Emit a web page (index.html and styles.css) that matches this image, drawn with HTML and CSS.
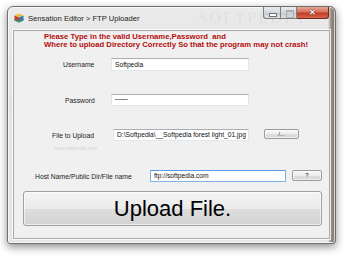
FILE: index.html
```html
<!DOCTYPE html>
<html lang="en">
<head>
    <meta charset="UTF-8">
    <title>Sensation Editor &gt; FTP Uploader</title>
    <link rel="stylesheet" href="styles.css">
</head>
<body>
    <div class="window">
        <div class="titlebar">
            <div class="caption">
                <svg class="app-icon" viewBox="0 0 10 10" width="10" height="10">
                    <path d="M5 0.5 L9.5 2.5 L5 4.5 L0.5 2.5 Z" fill="#e8c23a"/>
                    <path d="M0.5 2.5 L5 4.5 L5 9.5 L0.5 7.5 Z" fill="#d0362a"/>
                    <path d="M5 4.5 L9.5 2.5 L9.5 7.5 L5 9.5 Z" fill="#2b7fb8"/>
                    <path d="M0.5 6 L5 8 L9.5 6 L9.5 7.5 L5 9.5 L0.5 7.5 Z" fill="#2f9e7a"/>
                </svg>
                <span class="title">Sensation Editor &gt; FTP Uploader</span>
            </div>
            <span class="title-mark">SOFTPEDIA</span>
            <div class="caption-buttons">
                <span class="cap cap-min"></span>
                <span class="cap cap-max"></span>
                <span class="cap cap-close">&#x2715;</span>
            </div>
        </div>

        <div class="client">
            <p class="notice">Please Type in the valid Username,Password&nbsp; and<br>Where to upload Directory Correctly So that the program may not crash!</p>

            <div class="row row-user">
                <label class="label">Username</label>
                <div class="field">Softpedia</div>
            </div>

            <div class="row row-pass">
                <label class="label">Password</label>
                <div class="field field-pass">&bull;&bull;&bull;&bull;&bull;&bull;&bull;&bull;</div>
            </div>

            <div class="row row-file">
                <label class="label">File to Upload</label>
                <div class="field">D:\Softpedia\__Softpedia forest light_01.jpg</div>
                <button class="btn btn-browse">/...</button>
            </div>
            <div class="site-mark">www.softpedia.com</div>

            <div class="row row-host">
                <label class="label">Host Name/Public Dir/File name</label>
                <div class="field field-focus">ftp://softpedia.com</div>
                <button class="btn btn-help">?</button>
            </div>

            <button class="btn btn-upload">Upload File.</button>
        </div>
    </div>
</body>
</html>
```

FILE: styles.css
```css
* {
    margin: 0;
    padding: 0;
    box-sizing: border-box;
}

body {
    background: #ffffff;
    font-family: 'Liberation Sans', Arial, sans-serif;
    padding: 6px 0 0 7px;
    width: 350px;
    height: 257px;
    overflow: hidden;
}

.window {
    position: relative;
    width: 329px;
    height: 238px;
    padding: 0 5px 5px 5px;
    border: 1px solid #6f6f6f;
    border-radius: 6px 6px 3px 3px;
    background:
        linear-gradient(90deg, transparent 0, transparent calc(100% - 7px), #9a9084 calc(100% - 4px), #7c7268 100%),
        linear-gradient(180deg, #eaeaea 0, #e2e2e2 40%, #e6e6e6 100%);
    box-shadow: 0 3px 9px rgba(0,0,0,0.45), inset 0 0 0 1px rgba(255,255,255,0.7);
}

/* title bar */

.titlebar {
    position: relative;
    height: 23px;
    display: flex;
    align-items: flex-start;
}

.caption {
    display: flex;
    align-items: center;
    gap: 4px;
    height: 10px;
    margin: 6px 0 0 1px;
}

.app-icon {
    display: block;
    flex: none;
}

.title {
    font-size: 7.6px;
    color: #1c1c1c;
    white-space: nowrap;
}

.title-mark {
    position: absolute;
    left: 185px;
    top: 1px;
    font-family: 'Liberation Serif', serif;
    font-size: 17px;
    font-weight: bold;
    letter-spacing: 1px;
    color: rgba(0,0,0,0.035);
}

.caption-buttons {
    display: flex;
    margin-left: auto;
    margin-right: 1px;
    height: 12px;
}

.cap {
    position: relative;
    height: 12px;
    border: 1px solid #7d7d7d;
    border-top: none;
    background: linear-gradient(180deg, #e9ecef 0, #d4d8dc 50%, #c3c8cd 51%, #dde1e5 100%);
}

.cap-min,
.cap-max {
    width: 17px;
}

.cap-min {
    border-radius: 0 0 0 3px;
    border-right: none;
}

.cap-min::after {
    content: '';
    position: absolute;
    left: 5px;
    top: 6px;
    width: 6px;
    height: 2px;
    background: #fff;
    border: 1px solid #6d6d6d;
}

.cap-max::after {
    content: '';
    position: absolute;
    left: 5px;
    top: 3px;
    width: 6px;
    height: 5px;
    border: 1px solid #9a9a9a;
    border-top-width: 2px;
    opacity: 0.7;
}

.cap-close {
    width: 32px;
    border-left: none;
    border-color: #6b2a20;
    border-radius: 0 0 3px 0;
    background: linear-gradient(180deg, #eba697 0, #d9705e 45%, #c23b26 55%, #d7654a 100%);
    color: #fff;
    font-size: 8px;
    font-weight: bold;
    line-height: 11px;
    text-align: center;
    text-shadow: 0 0 1px #3a1a14, 0 0 1px #3a1a14;
}

/* client area */

.client {
    position: relative;
    height: 209px;
    background: #f0f0f0;
    border: 1px solid #a9a9a9;
    box-shadow: 0 0 0 1px rgba(255,255,255,0.8);
    display: flex;
    flex-direction: column;
    align-items: flex-start;
}

.notice {
    margin: 2px 0 0 30px;
    font-size: 7.7px;
    line-height: 7.6px;
    font-weight: bold;
    color: #b50d0d;
    white-space: nowrap;
}

.row {
    position: relative;
    display: flex;
    align-items: center;
    height: 12px;
}

.label {
    font-size: 6.8px;
    color: #1c1c1c;
    white-space: nowrap;
}

.field {
    height: 12px;
    width: 138px;
    padding: 0 3px;
    background: #ffffff;
    border: 1px solid #e3e6ea;
    border-top-color: #abadb3;
    font-size: 6.7px;
    line-height: 10px;
    color: #111;
    white-space: nowrap;
    overflow: hidden;
}

.field-pass {
    font-size: 4px;
    letter-spacing: 0.2px;
}

.field-focus {
    border-color: #7eb4ea;
    border-top-color: #569de5;
}

.row-user {
    margin: 10px 0 0 49px;
    height: 13px;
}

.row-user .field {
    height: 13px;
    line-height: 11px;
}

.row-user .label {
    width: 48px;
}

.row-pass {
    margin: 23px 0 0 51px;
}

.row-pass .label {
    width: 46px;
}

.row-file {
    margin: 23px 0 0 38px;
}

.row-file .label {
    width: 61px;
}

.row-file .field {
    width: 136px;
}

.site-mark {
    margin: 4px 0 0 40px;
    font-size: 5px;
    color: #d4d4d4;
}

.row-host {
    margin: 19px 0 0 21px;
}

.row-host .label {
    width: 115px;
}

.row-host .field {
    width: 136px;
}

/* buttons */

.btn {
    font-family: 'Liberation Sans', Arial, sans-serif;
    color: #1c1c1c;
    border: 1px solid #9a9a9a;
    border-radius: 2px;
    background: linear-gradient(180deg, #f6f6f6 0, #ececec 50%, #dedede 51%, #d6d6d6 100%);
    box-shadow: inset 0 0 0 1px rgba(255,255,255,0.6);
}

.btn-browse {
    margin-left: 15px;
    width: 35px;
    height: 10px;
    font-size: 6px;
    line-height: 8px;
    align-self: flex-start;
}

.btn-help {
    margin-left: 6px;
    width: 30px;
    height: 11px;
    font-size: 6px;
    line-height: 9px;
    align-self: flex-start;
}

.btn-upload {
    margin: 9px 0 0 9px;
    width: 299px;
    height: 35px;
    font-size: 22px;
    color: #000;
    border-color: #a0a0a0;
    border-radius: 3px;
    background: linear-gradient(180deg, #f4f4f4 0, #ebebeb 50%, #dddddd 51%, #d3d3d3 100%);
}
```
